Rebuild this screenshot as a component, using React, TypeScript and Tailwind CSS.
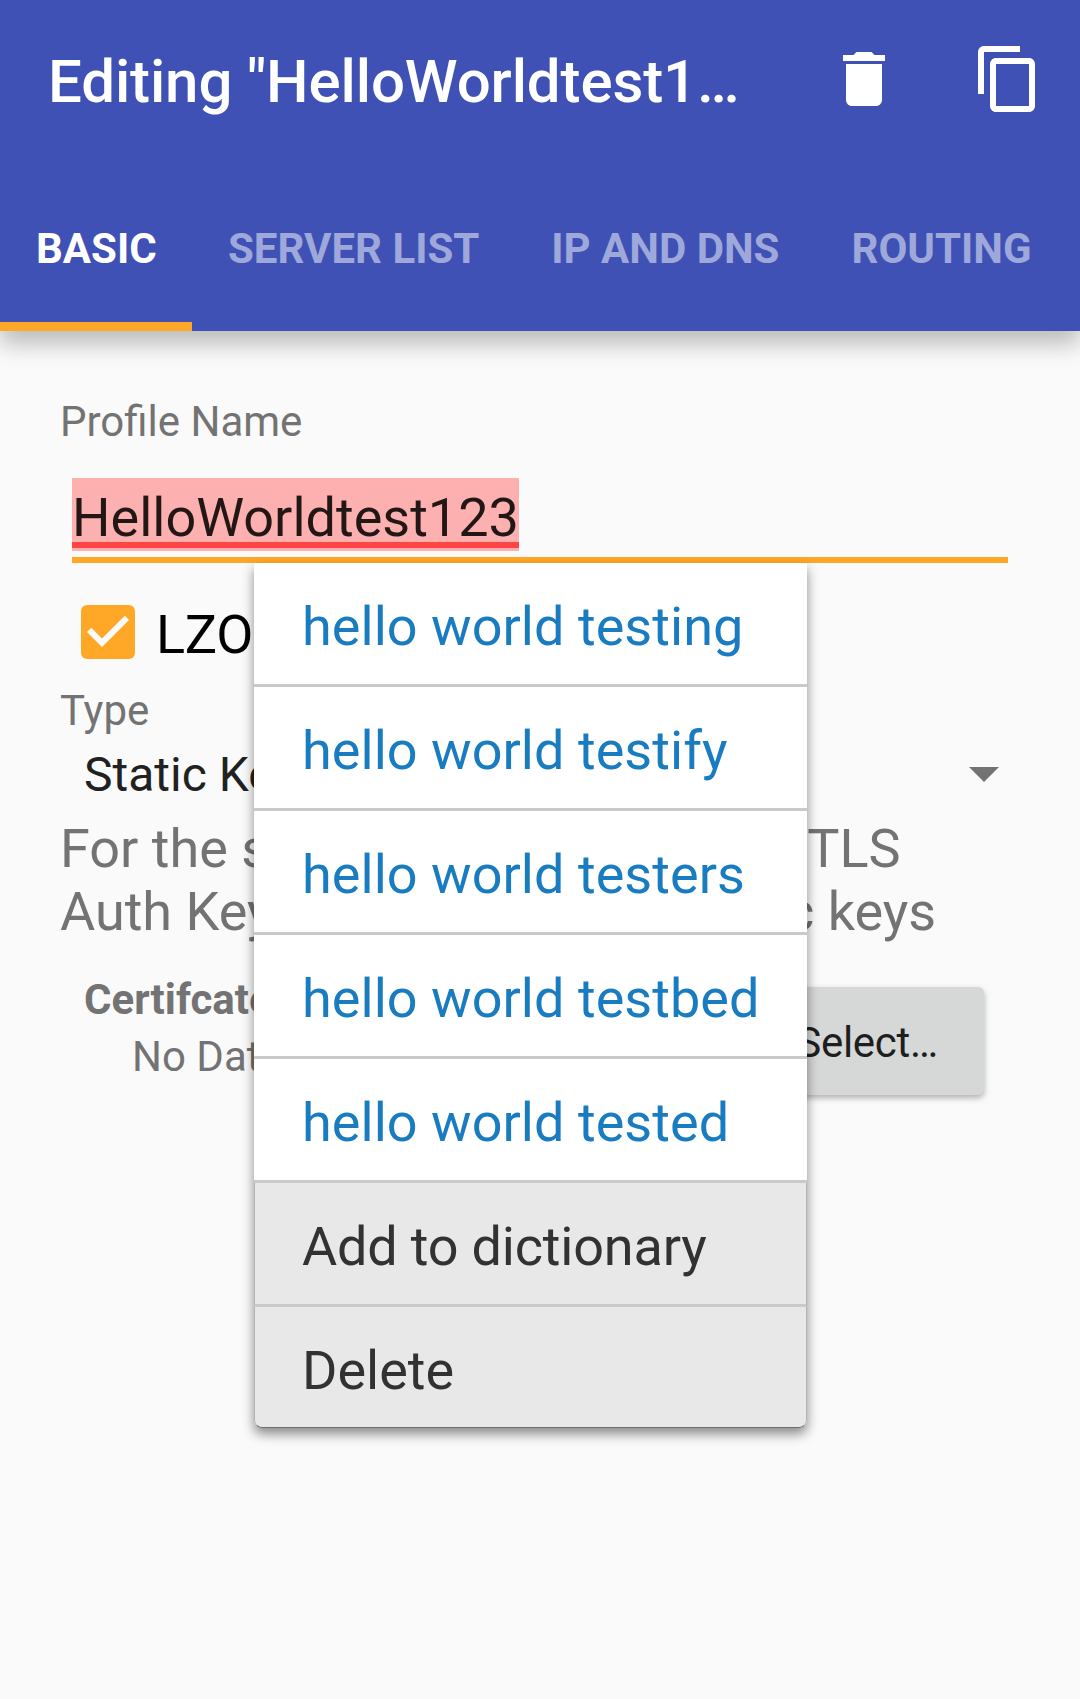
import React from "react";

const tabs = [
  { label: "BASIC", active: true },
  { label: "SERVER LIST", active: false },
  { label: "IP AND DNS", active: false },
  { label: "ROUTING", active: false },
];

const suggestions = [
  "hello world testing",
  "hello world testify",
  "hello world testers",
  "hello world testbed",
  "hello world tested",
];

function TrashIcon() {
  return (
    <svg className="size-[72px] shrink-0" viewBox="0 0 24 24" fill="currentColor">
      <path d="M6 19c0 1.1.9 2 2 2h8c1.1 0 2-.9 2-2V7H6v12zM19 4h-3.5l-1-1h-5l-1 1H5v2h14V4z" />
    </svg>
  );
}

function CopyIcon() {
  return (
    <svg className="size-[72px] shrink-0" viewBox="0 0 24 24" fill="currentColor">
      <path d="M16 1H4c-1.1 0-2 .9-2 2v14h2V3h12V1zm3 4H8c-1.1 0-2 .9-2 2v14c0 1.1.9 2 2 2h11c1.1 0 2-.9 2-2V7c0-1.1-.9-2-2-2zm0 16H8V7h11v14z" />
    </svg>
  );
}

function Header() {
  return (
    <header className="relative z-10 h-[331px] bg-[#3f51b5] text-white shadow-[0_13px_22px_rgba(0,0,0,0.25)]">
      <div className="mb-2 flex h-[158px] items-center pr-9 pl-12">
        <h1 className="w-[780px] truncate pt-[5px] text-[60px] leading-[80px] font-medium tracking-[-0.12px]">
          Editing "HelloWorldtest1…
        </h1>
        <TrashIcon />
        <div className="w-[72px] shrink-0" />
        <CopyIcon />
      </div>
      <nav className="flex h-[165px]">
        {tabs.map((t) => (
          <div
            key={t.label}
            className={
              t.active
                ? "flex w-[192px] shrink-0 items-center border-b-[9px] border-[#ffa726] pt-[9px] pl-9 text-[42px] font-bold"
                : "flex shrink-0 items-center px-9 text-[42px] font-bold text-[#9fa8da]"
            }
          >
            {t.label}
          </div>
        ))}
      </nav>
    </header>
  );
}

function SuggestionMenu() {
  return (
    <div className="absolute top-[563px] left-[254px] z-20 flex h-[865px] w-[553px] flex-col rounded-b-[8px] bg-white text-[54px] shadow-[0_6px_12px_rgba(0,0,0,0.45)]">
      {suggestions.map((s) => (
        <div
          key={s}
          className="h-[124px] border-b-[3px] border-[#cacaca] pt-[3px] pl-12 leading-[122px] tracking-[0.04px] text-[#197cc0]"
        >
          {s}
        </div>
      ))}
      <div className="h-[124px] border-x border-x-[#b4b4b4] border-b-[3px] border-b-[#cacaca] bg-[#e8e8e8] pt-[3px] pl-[47px] leading-[122px] tracking-[-0.19px] text-[#323232]">
        Add to dictionary
      </div>
      <div className="h-[121px] rounded-b-[8px] border-x border-b border-x-[#b4b4b4] border-b-[#6e6e6e] bg-[#e8e8e8] pt-[3px] pl-[47px] leading-[122px] text-[#323232]">
        Delete
      </div>
    </div>
  );
}

export default function App() {
  return (
    <div className="relative h-[1699px] w-[1080px] overflow-hidden bg-[#fafafa] font-['Roboto',sans-serif] text-[#737373]">
      <Header />
      <main className="pr-[72px] pl-[60px]">
        <div className="pt-[66px] text-[42px] leading-[50px]">Profile Name</div>

        <div className="mt-[31px] ml-3 flex h-[85px] items-start border-b-[6px] border-[#ffa726]">
          <div className="relative h-[73px] bg-[#fcb0b0] text-[54px] leading-[79px] text-[#231715]">
            HelloWorldtest123
            <div className="absolute inset-x-0 bottom-[3px] h-[6px] bg-[#ff4444]" />
          </div>
        </div>

        <div className="mt-[33px] ml-3 flex h-[72px] items-center text-[54px] leading-[77px] text-black">
          <svg className="mr-3 size-[72px]" viewBox="0 0 24 24">
            <rect x="3" y="3" width="18" height="18" rx="2" fill="#ffa726" />
            <path d="M10 17l-5-5 1.41-1.41L10 14.17l7.59-7.59L19 8l-9 9z" fill="#fafafa" />
          </svg>
          <span className="pt-[5px] tracking-[-0.3px]">LZO</span>
        </div>

        <div className="mt-[18px] text-[42px] leading-[50px]">Type</div>
        <div className="mt-2 flex h-[62px] items-center justify-between pl-6 text-[48px] text-[#212121]">
          <span>Static Keys</span>
          <svg className="mt-[-4px] mr-[-12px] size-[72px] text-[#737373]" viewBox="0 0 24 24" fill="currentColor">
            <path d="M7 10l5 5 5-5z" />
          </svg>
        </div>
        <p className="mt-[11px] text-[54px] leading-[63px]">
          For the static configuration the TLS
          <br />
          Auth Keys will be used as static keys
        </p>

        <div className="mt-8 flex items-start justify-between pr-6 pl-6">
          <div>
            <div className="text-[42px] leading-[50px] font-bold">Certifcate</div>
            <div className="mt-[7px] pl-12 text-[42px] leading-[50px]">No Data</div>
          </div>
          <div className="mt-3 flex h-[108px] w-[234px] items-center justify-center rounded-[6px] bg-[#d6d7d7] pt-[2px] text-[42px] tracking-[-0.3px] text-[#1e1e1e] shadow-[0_3px_6px_rgba(0,0,0,0.3)]">
            Select…
          </div>
        </div>
      </main>
      <SuggestionMenu />
    </div>
  );
}
